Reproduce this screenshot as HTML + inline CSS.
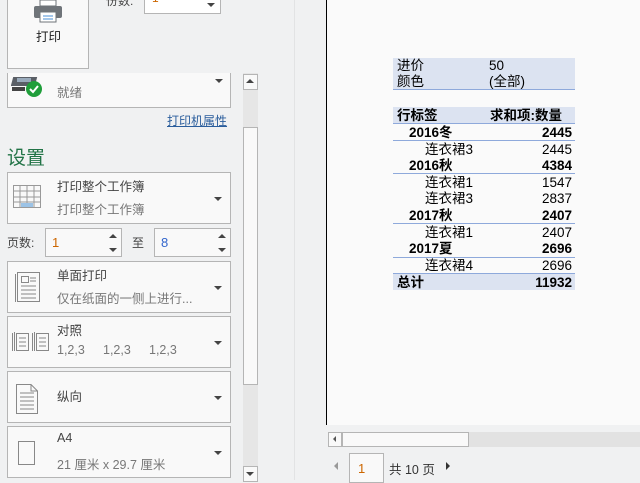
<!DOCTYPE html>
<html><head><meta charset="utf-8"><style>
*{margin:0;padding:0;box-sizing:border-box}
body{width:640px;height:480px;overflow:hidden;background:#f0f1f2;font-family:"Liberation Sans","Noto Sans CJK SC",sans-serif;font-size:12px;color:#444;position:relative}
.a{position:absolute}
.box{position:absolute;border:1px solid #b5b5b5;background:#f9f9f9}
.dd{position:absolute;left:7px;width:224px;height:52px;border:1px solid #b5b5b5;background:#f9f9f9}
.dd .t1{position:absolute;left:49px;top:3px;color:#444;font-size:12.5px}
.dd .t2{position:absolute;left:49px;top:26px;color:#777;font-size:12.5px;white-space:nowrap}
.arr{position:absolute;width:0;height:0;border-left:4px solid transparent;border-right:4px solid transparent;border-top:4px solid #444}
.dd .arr{right:8px;top:24px}
.up{position:absolute;width:0;height:0;border-left:4px solid transparent;border-right:4px solid transparent;border-bottom:4px solid #444}
.tb{position:absolute;font-size:13.5px;color:#000;white-space:nowrap;line-height:17px}
</style></head><body>
<div class="box" style="left:7px;top:-3px;width:82px;height:72px"></div>
<svg class="a" style="left:33px;top:0" width="30" height="24"><rect x="1" y="6" width="28" height="12" rx="2" fill="#6f7479"/><rect x="7" y="0" width="16" height="6" fill="#fff" stroke="#6f7479"/><rect x="7" y="12" width="16" height="10" fill="#fff" stroke="#6f7479"/><line x1="10" y1="16" x2="20" y2="16" stroke="#4a8fd6"/><line x1="10" y1="19" x2="20" y2="19" stroke="#4a8fd6"/></svg>
<div class="a" style="left:36px;top:26px;font-size:12.5px;color:#222">打印</div>
<div class="a" style="left:106px;top:-8px;color:#444">份数:</div>
<div class="box" style="left:144px;top:-4px;width:77px;height:18px;background:#fff"></div>
<div class="a" style="left:152px;top:-9px;color:#c60">1</div>
<div class="arr" style="left:207px;top:3px"></div>

<div class="box" style="left:7px;top:73px;width:224px;height:35px;border-top:none"></div>
<svg class="a" style="left:11px;top:74px" width="34" height="24"><rect x="3" y="3" width="24" height="9" fill="#5a5f66" transform="skewX(-15)"/><rect x="6" y="4" width="14" height="4" fill="#9ab"/><path d="M1 13 L14 13 L14 17 L1 17Z" fill="#444"/><circle cx="23" cy="15" r="8" fill="#1f9e3a"/><path d="M19 15 l3 3 l5 -6" stroke="#fff" stroke-width="2" fill="none"/></svg>
<div class="a" style="left:57px;top:82px;color:#777;font-size:12.5px">就绪</div>
<div class="arr" style="left:215px;top:79px"></div>
<div class="a" style="left:167px;top:112px;color:#2a5d9c;text-decoration:underline;font-size:12px">打印机属性</div>
<div class="a" style="left:7px;top:143px;color:#217346;font-size:19px">设置</div>

<div class="dd" style="top:172px"><svg class="a" style="left:5px;top:12px" width="32" height="28"><g stroke="#999" fill="none"><rect x="0.5" y="0.5" width="27" height="22"/><line x1="0" y1="6" x2="28" y2="6"/><line x1="0" y1="12" x2="28" y2="12"/><line x1="0" y1="17" x2="28" y2="17"/><line x1="7" y1="0" x2="7" y2="23"/><line x1="14" y1="0" x2="14" y2="23"/><line x1="21" y1="0" x2="21" y2="23"/></g><rect x="8" y="18" width="12" height="4" fill="#9cc3e6"/></svg><div class="t1">打印整个工作簿</div><div class="t2">打印整个工作簿</div><div class="arr"></div></div>

<div class="a" style="left:7px;top:234px">页数:</div>
<div class="box" style="left:45px;top:228px;width:77px;height:29px"></div>
<div class="a" style="left:52px;top:235px;color:#c60;font-size:13px">1</div>
<div class="up" style="left:109px;top:234px"></div><div class="arr" style="left:109px;top:248px"></div>
<div class="a" style="left:132px;top:234px">至</div>
<div class="box" style="left:154px;top:228px;width:77px;height:29px"></div>
<div class="a" style="left:161px;top:235px;color:#36c;font-size:13px">8</div>
<div class="up" style="left:218px;top:234px"></div><div class="arr" style="left:218px;top:248px"></div>

<div class="dd" style="top:261px"><svg class="a" style="left:7px;top:10px" width="28" height="32"><g stroke="#888" fill="none"><rect x="2.5" y="0.5" width="22" height="29"/><line x1="0.5" y1="2" x2="0.5" y2="30"/><rect x="6.5" y="4.5" width="7" height="6"/><line x1="15" y1="6" x2="21" y2="6"/><line x1="15" y1="9" x2="21" y2="9"/><line x1="6" y1="14" x2="21" y2="14"/><line x1="6" y1="18" x2="21" y2="18"/><line x1="6" y1="22" x2="21" y2="22"/><line x1="6" y1="26" x2="21" y2="26"/></g></svg><div class="t1">单面打印</div><div class="t2">仅在纸面的一侧上进行...</div><div class="arr"></div></div>

<div class="dd" style="top:316px"><svg class="a" style="left:4px;top:14px" width="40" height="22"><g stroke="#888" fill="none"><rect x="4.5" y="2.5" width="12" height="17"/><rect x="24.5" y="2.5" width="12" height="17"/><line x1="0.5" y1="2" x2="0.5" y2="20"/><line x1="2.5" y1="1" x2="2.5" y2="20"/><line x1="20.5" y1="2" x2="20.5" y2="20"/><line x1="22.5" y1="1" x2="22.5" y2="20"/><line x1="7" y1="7" x2="14" y2="7"/><line x1="7" y1="11" x2="14" y2="11"/><line x1="7" y1="15" x2="14" y2="15"/><line x1="27" y1="7" x2="34" y2="7"/><line x1="27" y1="11" x2="34" y2="11"/><line x1="27" y1="15" x2="34" y2="15"/></g></svg><div class="t1">对照</div><div class="t2">1,2,3</div><div class="t2" style="left:95px">1,2,3</div><div class="t2" style="left:141px">1,2,3</div><div class="arr"></div></div>

<div class="dd" style="top:371px"><svg class="a" style="left:8px;top:12px" width="24" height="30"><g stroke="#888" fill="none"><path d="M0.5 0.5 H15 L21.5 7 V29.5 H0.5Z"/><path d="M15 0.5 V7 H21.5"/><line x1="4" y1="9" x2="18" y2="9"/><line x1="4" y1="13" x2="18" y2="13"/><line x1="4" y1="17" x2="18" y2="17"/><line x1="4" y1="21" x2="18" y2="21"/><line x1="4" y1="25" x2="18" y2="25"/></g></svg><div class="t1" style="top:14px">纵向</div><div class="arr"></div></div>

<div class="dd" style="top:426px"><svg class="a" style="left:10px;top:14px" width="20" height="26"><rect x="0.5" y="0.5" width="16" height="23" stroke="#888" fill="none"/></svg><div class="t1" style="top:4px">A4</div><div class="t2" style="top:27px">21 厘米 x 29.7 厘米</div><div class="arr"></div></div>

<div class="a" style="left:243px;top:73px;width:15px;height:407px;background:#e6e6e6"></div>
<div class="box" style="left:243px;top:74px;width:15px;height:16px"></div>
<div class="up" style="left:246px;top:79px"></div>
<div class="box" style="left:243px;top:127px;width:15px;height:258px"></div>
<div class="box" style="left:243px;top:466px;width:15px;height:16px"></div>
<div class="arr" style="left:246px;top:472px"></div>

<div class="a" style="left:294px;top:0;width:1px;height:480px;background:#e2e3e4"></div>

<div class="a" style="left:326px;top:0;width:314px;height:425px;background:#fafafa;border-left:1px solid #000"></div>
<div class="a" style="left:328px;top:432px;width:312px;height:15px;background:#e2e2e2"></div>
<div class="box" style="left:328px;top:432px;width:14px;height:15px"></div>
<div class="a" style="left:333px;top:436px;border-top:3px solid transparent;border-bottom:3px solid transparent;border-right:3px solid #555"></div>
<div class="box" style="left:342px;top:432px;width:127px;height:15px"></div>
<div class="a" style="left:334px;top:462px;border-top:4px solid transparent;border-bottom:4px solid transparent;border-right:4px solid #999"></div>
<div class="box" style="left:349px;top:453px;width:35px;height:30px;background:#f9f9f9"></div>
<div class="a" style="left:358px;top:461px;color:#c60;font-size:13px">1</div>
<div class="a" style="left:389px;top:459px;color:#333;font-size:12.5px">共 10 页</div>
<div class="a" style="left:446px;top:462px;border-top:4px solid transparent;border-bottom:4px solid transparent;border-left:4px solid #333"></div>

<div class="a" style="left:393px;top:58px;width:182px;height:32px;background:#dce3f1;border-bottom:1px solid #8ea9db"></div>
<div class="tb" style="left:397px;top:57px">进价</div><div class="tb" style="left:489px;top:57px">50</div>
<div class="tb" style="left:397px;top:73px">颜色</div><div class="tb" style="left:489px;top:73px">(全部)</div>
<div class="a" style="left:393px;top:107px;width:182px;height:17px;background:#dce3f1;border-bottom:1px solid #8ea9db"></div>
<div class="tb" style="left:397px;top:107px;font-weight:bold">行标签</div><div class="tb" style="left:490px;top:107px;font-weight:bold">求和项:数量</div>
<div class="a" style="left:393px;top:140px;width:182px;height:1px;background:#8ea9db"></div>
<div class="a" style="left:393px;top:173px;width:182px;height:1px;background:#8ea9db"></div>
<div class="a" style="left:393px;top:223px;width:182px;height:1px;background:#8ea9db"></div>
<div class="a" style="left:393px;top:257px;width:182px;height:1px;background:#8ea9db"></div>
<div class="a" style="left:393px;top:273px;width:182px;height:17px;background:#dce3f1;border-top:1px solid #8ea9db"></div>

<div class="tb" style="left:409px;top:124px;font-weight:bold">2016冬</div><div class="tb" style="right:68px;top:124px;font-weight:bold">2445</div>
<div class="tb" style="left:425px;top:141px">连衣裙3</div><div class="tb" style="right:68px;top:141px">2445</div>
<div class="tb" style="left:409px;top:157px;font-weight:bold">2016秋</div><div class="tb" style="right:68px;top:157px;font-weight:bold">4384</div>
<div class="tb" style="left:425px;top:174px">连衣裙1</div><div class="tb" style="right:68px;top:174px">1547</div>
<div class="tb" style="left:425px;top:190px">连衣裙3</div><div class="tb" style="right:68px;top:190px">2837</div>
<div class="tb" style="left:409px;top:207px;font-weight:bold">2017秋</div><div class="tb" style="right:68px;top:207px;font-weight:bold">2407</div>
<div class="tb" style="left:425px;top:224px">连衣裙1</div><div class="tb" style="right:68px;top:224px">2407</div>
<div class="tb" style="left:409px;top:240px;font-weight:bold">2017夏</div><div class="tb" style="right:68px;top:240px;font-weight:bold">2696</div>
<div class="tb" style="left:425px;top:257px">连衣裙4</div><div class="tb" style="right:68px;top:257px">2696</div>
<div class="tb" style="left:397px;top:274px;font-weight:bold">总计</div><div class="tb" style="right:68px;top:274px;font-weight:bold">11932</div>
</body></html>
